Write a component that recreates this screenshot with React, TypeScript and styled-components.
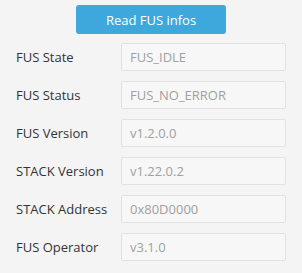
import React, { FC } from 'react';
import styled, { createGlobalStyle } from 'styled-components';

const GlobalStyle = createGlobalStyle`
  html, body {
    margin: 0;
    padding: 0;
    background: #f4f4f4;
  }
  * {
    box-sizing: border-box;
  }
`;

const fields = [
  { label: 'FUS State', value: 'FUS_IDLE' },
  { label: 'FUS Status', value: 'FUS_NO_ERROR' },
  { label: 'FUS Version', value: 'v1.2.0.0' },
  { label: 'STACK Version', value: 'v1.22.0.2' },
  { label: 'STACK Address', value: '0x80D0000' },
  { label: 'FUS Operator', value: 'v3.1.0' },
];

const App: FC = () => (
  <>
    <GlobalStyle />
    <Panel>
      <ReadButton type="button">Read FUS infos</ReadButton>
      <FieldList>
        {fields.map((f) => (
          <FieldRow key={f.label}>
            <FieldLabel>{f.label}</FieldLabel>
            <FieldValue readOnly value={f.value} />
          </FieldRow>
        ))}
      </FieldList>
    </Panel>
  </>
);

const Panel = styled.div`
  width: 302px;
  height: 273px;
  background: #f4f4f4;
  padding: 5px 16px 0 16px;
  display: flex;
  flex-direction: column;
  align-items: center;
  font-family: 'Open Sans', 'Noto Sans', sans-serif;
  font-size: 13px;
`;

const ReadButton = styled.button`
  width: 150px;
  height: 29px;
  border: none;
  border-radius: 3px;
  background: #3ea8dc;
  color: #ffffff;
  font-family: inherit;
  font-size: 13px;
  padding: 0;
  cursor: pointer;
`;

const FieldList = styled.div`
  width: 100%;
  margin-top: 9px;
  display: flex;
  flex-direction: column;
  gap: 10px;
`;

const FieldRow = styled.div`
  display: grid;
  grid-template-columns: 105px 1fr;
  align-items: center;
`;

const FieldLabel = styled.span`
  color: #333333;
  white-space: nowrap;
`;

const FieldValue = styled.input`
  height: 28px;
  width: 100%;
  border: 1px solid #e2e2e2;
  border-radius: 2px;
  background: #f7f7f7;
  color: #a0a0a0;
  font-family: inherit;
  font-size: 13px;
  padding: 0 8px;
  outline: none;
`;

export default App;
